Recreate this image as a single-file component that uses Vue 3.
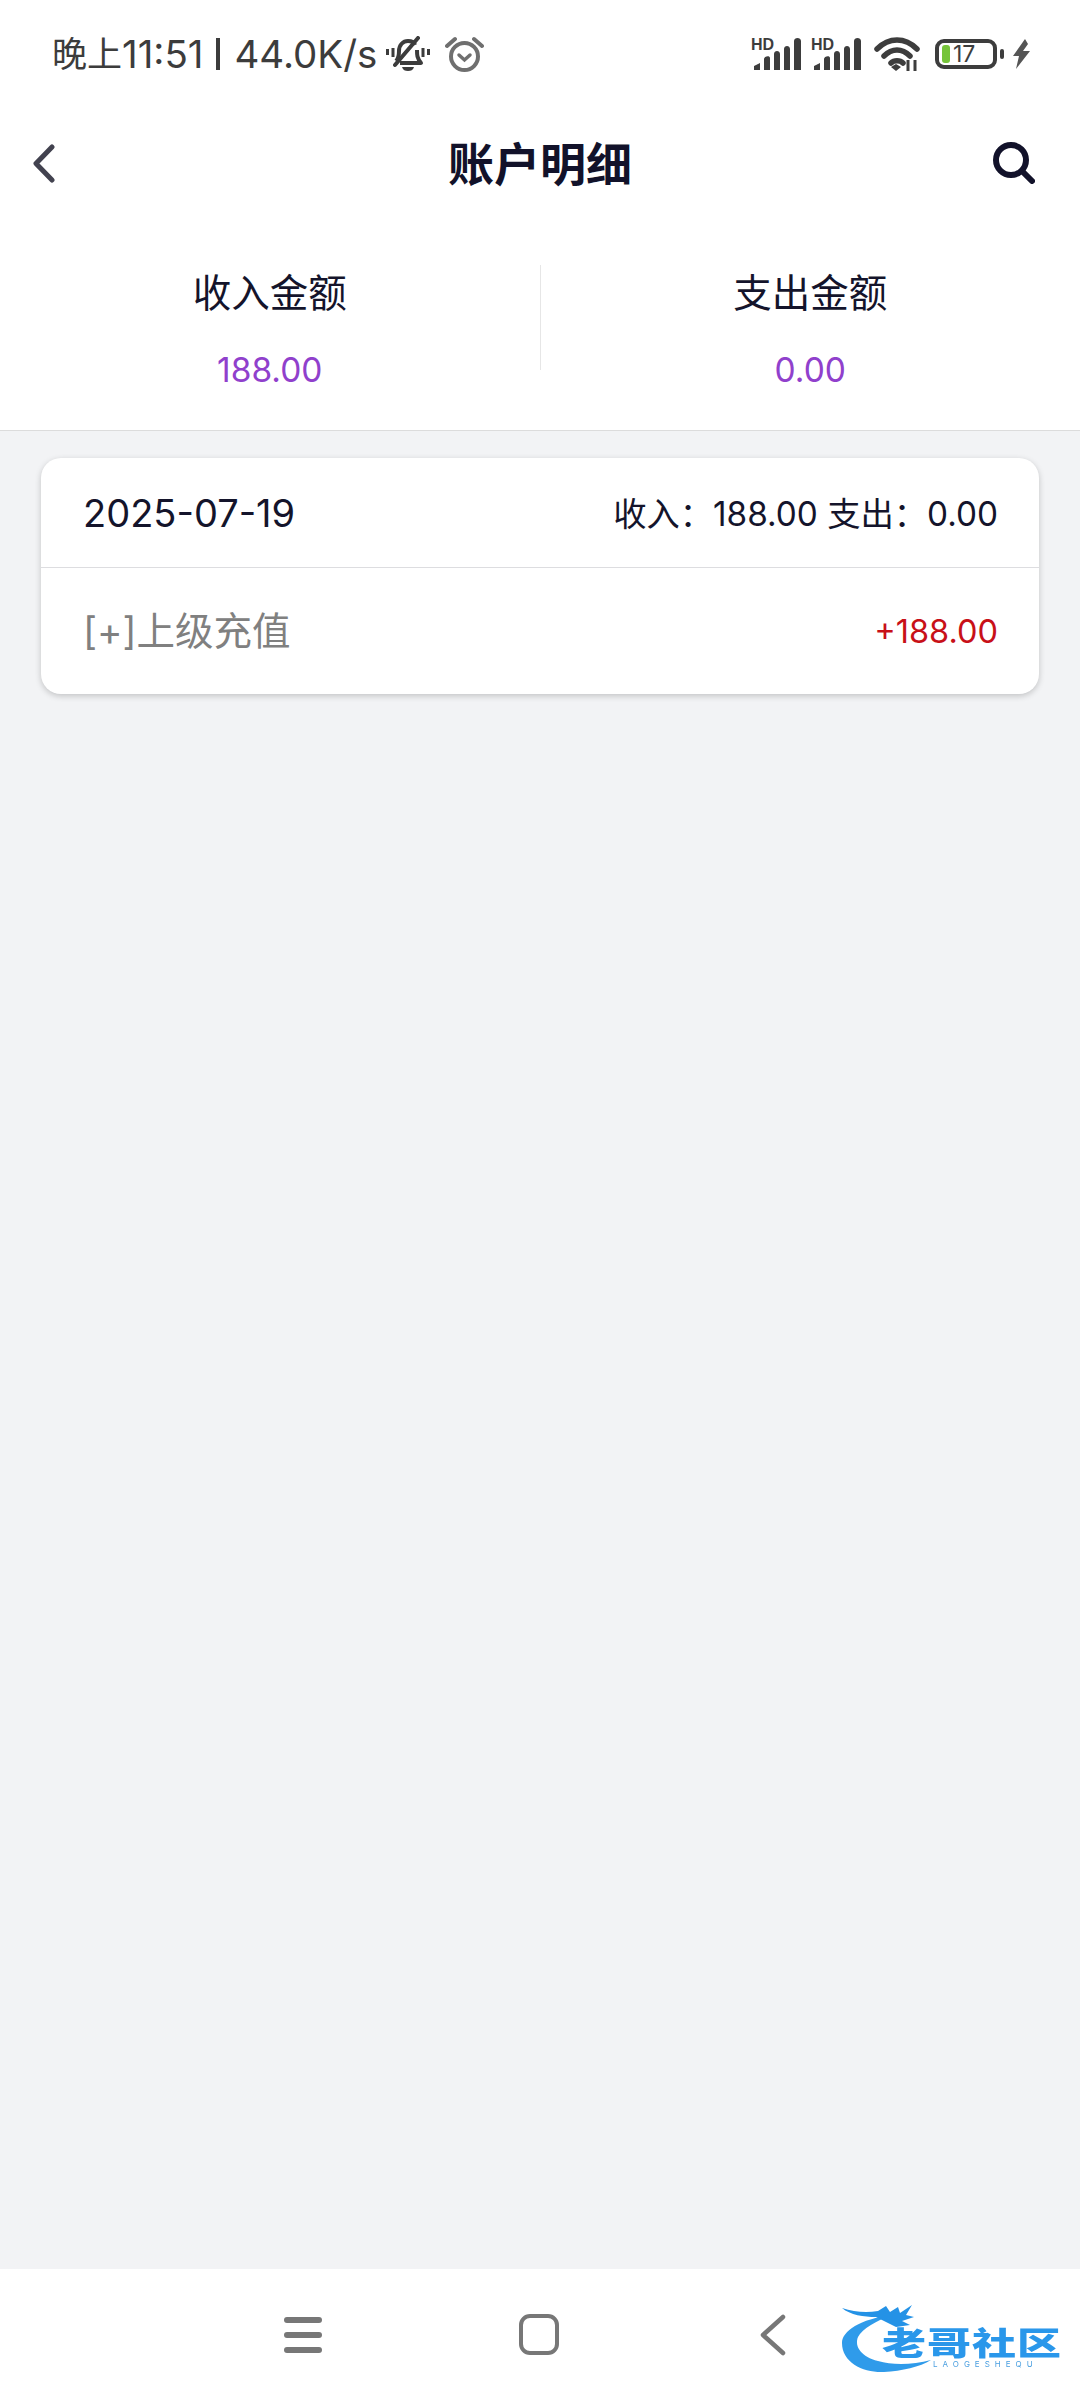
<script setup>
const totals = [
  { label: '收入金额', value: '188.00' },
  { label: '支出金额', value: '0.00' }
];
</script>

<template>
  <div class="page">
    <div class="status-bar">
      <div class="status-left">
        <span class="status-text">晚上<span class="status-num">11:51</span><span class="status-pipe"></span><span class="status-num">44.0K/s</span></span>
        <svg class="bell" viewBox="0 0 44 36" width="44" height="36">
          <path d="M10 25c3-3 3-6 3-10 0-6 4-10 9-10 3 0 6 1 7 4M31 14c0 5 0 8 4 13H14" fill="none" stroke="#3c3c3c" stroke-width="4" stroke-linejoin="round" />
          <path d="M9 29 32 2" stroke="#3c3c3c" stroke-width="4" stroke-linecap="round" />
          <path d="M16 31h12c-1 3-3 4-6 4s-5-1-6-4z" fill="#3c3c3c" />
          <path d="M7 12v9M1.500 13v6M37 12v9M42.500 13v6" stroke="#3c3c3c" stroke-width="3" />
        </svg>
        <svg class="alarm" viewBox="0 0 39 36" width="39" height="36">
          <circle cx="19.500" cy="20.500" r="13.500" fill="none" stroke="#6f6f6f" stroke-width="4" />
          <path d="M14 19l5.500 5 5.500-5" fill="none" stroke="#6f6f6f" stroke-width="3.500" stroke-linecap="round" />
          <path d="M2 10l8-7M37 10l-8-7" stroke="#6f6f6f" stroke-width="4" stroke-linecap="round" />
        </svg>
      </div>
      <div class="status-right">
        <svg v-for="n in 2" :key="n" class="signal" viewBox="0 -4 50 38" width="50" height="38">
          <text x="0" y="12" class="hd">HD</text>
          <path d="M3 32v-4l6-3v7zM13 32V21c0-3 6-4 6-1v12zM23 32V16c0-4 6-4 6 0v16zM33 32V11c0-4 6-4 6 0v21zM43 32V3c0-4 7-4 7 0v29z" fill="#3d3d3d" />
        </svg>
        <svg class="wifi" viewBox="0 0 46 36" width="46" height="36">
          <path d="M3 13c12-12 28-12 40 0M10 20c8-8 18-8 26 0M17 27c3-3 9-3 12 0" fill="none" stroke="#3d3d3d" stroke-width="5.500" stroke-linecap="round" />
          <path d="M17 31l5-3 5 3-5 4z" fill="#3d3d3d" />
          <path d="M34 24v11M41 24v11" stroke="#3d3d3d" stroke-width="3" />
        </svg>
        <div class="battery">
          <span class="battery-level"></span>
          <span class="battery-num">17</span>
        </div>
        <span class="battery-nub"></span>
        <svg class="bolt" viewBox="0 0 18 30" width="18" height="30">
          <path d="M13 0 1 17h6L4 30l14-18h-7l5-7z" fill="#555" />
        </svg>
      </div>
    </div>

    <div class="nav">
      <svg class="nav-back" viewBox="0 0 22 39" width="22" height="39">
        <path d="M19 3 3 19.500 19 36" fill="none" stroke="#42424f" stroke-width="5" stroke-linecap="round" stroke-linejoin="round" />
      </svg>
      <span class="nav-title">账户明细</span>
      <svg class="nav-search" viewBox="0 0 42 42" width="42" height="42">
        <circle cx="18" cy="18" r="15" fill="none" stroke="#12122a" stroke-width="6" />
        <path d="M29 29 39 39" stroke="#12122a" stroke-width="6" stroke-linecap="round" />
      </svg>
    </div>

    <div class="summary">
      <div v-for="item in totals" :key="item.label" class="summary-col">
        <div class="summary-label">{{ item.label }}</div>
        <div class="summary-value">{{ item.value }}</div>
      </div>
    </div>

    <div class="content">
      <div class="card">
        <div class="card-head">
          <span class="card-date">2025-07-19</span>
          <span class="card-sum">收入：188.00 支出：0.00</span>
        </div>
        <div class="card-row">
          <span class="row-name">[+]上级充值</span>
          <span class="row-amount">+188.00</span>
        </div>
      </div>
    </div>

    <div class="bottom-nav">
      <div class="menu-icon">
        <span></span><span></span><span></span>
      </div>
      <div class="home-icon"></div>
      <svg class="back-icon" viewBox="0 0 26 42" width="26" height="42">
        <path d="M23 3 3 21 23 39" fill="none" stroke="#777" stroke-width="4.500" stroke-linecap="round" stroke-linejoin="round" />
      </svg>
      <div class="logo">
        <svg class="logo-dragon" viewBox="0 0 110 72" width="110" height="72">
          <path d="M52 12C20 16 2 28 2 40c0 20 22 30 42 29 18-1 36-5 47-12-19 5-39 5-53 1C22 54 14 44 18 34c4-8 18-16 34-22z" fill="#2f9bea" />
          <path d="M2 5c12 4 24 5 36 3l8-5 4 6 8-5 2 6 12-8-6 10 8 2-12 4 8 4-14 2-8-4-12-6C24 14 10 12 2 5z" fill="#2492e6" />
        </svg>
        <span class="logo-text">老哥社区</span>
        <span class="logo-sub">LAOGESHEQU</span>
      </div>
    </div>
  </div>
</template>

<style scoped>
.page {
  width: 1080px;
  height: 2400px;
  display: flex;
  flex-direction: column;
  background: #f2f3f5;
  font-family: Inter, "Noto Sans CJK SC", sans-serif;
  overflow: hidden;
}

.status-bar {
  height: 106px;
  flex-shrink: 0;
  box-sizing: border-box;
  padding: 36px 50px 0 52px;
  display: flex;
  justify-content: space-between;
  align-items: flex-start;
  background: #fff;
}

.status-left {
  display: flex;
  align-items: center;
  height: 36px;
}

.status-text {
  width: 334px;
  display: flex;
  align-items: center;
  font-size: 35px;
  line-height: 36px;
  color: #3c3c3c;
  white-space: nowrap;
}

.status-num {
  font-size: 38.500px;
}

.status-pipe {
  width: 4px;
  height: 32px;
  margin: 0 15px 0 12px;
  background: #3c3c3c;
}

.alarm {
  margin-left: 15px;
}

.status-right {
  display: flex;
  align-items: center;
  height: 36px;
}

.signal {
  align-self: flex-start;
  margin: -2px 10px 0 0;
}

.hd {
  font-size: 16px;
  font-weight: 700;
  fill: #3d3d3d;
  font-family: "Liberation Sans", sans-serif;
}

.wifi {
  margin: 0 15px 0 3px;
}

.battery {
  position: relative;
  width: 62px;
  height: 30px;
  box-sizing: border-box;
  border: 4px solid #3d3d3d;
  border-radius: 9px;
  display: flex;
  align-items: center;
}

.battery-level {
  width: 8px;
  height: 18px;
  margin-left: 3px;
  border-radius: 3px;
  background: #76c43a;
}

.battery-num {
  margin-left: 3px;
  font-size: 23px;
  line-height: 22px;
  color: #3d3d3d;
}

.battery-nub {
  width: 4px;
  height: 10px;
  margin: 0 8px 0 3px;
  border-radius: 2px;
  background: #3d3d3d;
}

.nav {
  height: 114px;
  flex-shrink: 0;
  box-sizing: border-box;
  padding: 0 33px;
  display: grid;
  grid-template-columns: 1fr auto 1fr;
  align-items: center;
  background: #fff;
}

.nav-title {
  padding-bottom: 4px;
  font-size: 46px;
  font-weight: 700;
  color: #12122a;
}

.nav-search {
  justify-self: end;
  margin-right: 12px;
}

.summary {
  height: 211px;
  flex-shrink: 0;
  box-sizing: border-box;
  padding-top: 45px;
  display: flex;
  align-items: flex-start;
  background: #fff;
  border-bottom: 1px solid #dcdcdc;
}

.summary-col {
  flex: 1;
  height: 105px;
  text-align: center;
}

.summary-col + .summary-col {
  border-left: 1px solid #e6e6e6;
}

.summary-label {
  font-size: 38.500px;
  line-height: 56px;
  color: #14142b;
}

.summary-value {
  margin-top: 29px;
  font-size: 33.500px;
  line-height: 40px;
  color: #9040cc;
}

.content {
  flex: 1;
  padding: 27px 41px 0 41px;
}

.card {
  height: 236px;
  display: flex;
  flex-direction: column;
  background: #fff;
  border-radius: 20px;
  box-shadow: 0 2px 6px rgba(0, 0, 0, 0.2);
}

.card-head {
  height: 110px;
  box-sizing: border-box;
  padding: 0 41px 0 42px;
  display: flex;
  justify-content: space-between;
  align-items: center;
  border-bottom: 1px solid #dddde0;
}

.card-date {
  font-size: 38px;
  color: #14142b;
}

.card-sum {
  padding-bottom: 3px;
  font-size: 33.300px;
  color: #14142b;
}

.card-row {
  flex: 1;
  padding: 0 41px 0 42px;
  display: flex;
  justify-content: space-between;
  align-items: center;
}

.row-name {
  padding-bottom: 6px;
  font-size: 38.500px;
  color: #808080;
}

.row-amount {
  font-size: 32.500px;
  color: #c81018;
}

.bottom-nav {
  position: relative;
  height: 131px;
  flex-shrink: 0;
  box-sizing: border-box;
  padding: 45px 0 0 284px;
  display: flex;
  align-items: flex-start;
  background: #fff;
}

.menu-icon {
  width: 38px;
  height: 36px;
  margin-top: 3px;
  display: flex;
  flex-direction: column;
  justify-content: space-between;
}

.menu-icon span {
  height: 6px;
  border-radius: 3px;
  background: #777;
}

.home-icon {
  width: 40px;
  height: 41px;
  margin-left: 197px;
  box-sizing: border-box;
  border: 4px solid #777;
  border-radius: 11px;
}

.back-icon {
  margin-left: 201px;
}

.logo {
  position: absolute;
  left: 840px;
  top: 34px;
  width: 225px;
  height: 72px;
  filter: blur(0.6px);
}

.logo-dragon {
  position: absolute;
  left: 0;
  top: 0;
}

.logo-text {
  position: absolute;
  left: 42px;
  top: 18px;
  font-size: 44px;
  line-height: 44px;
  font-weight: 900;
  letter-spacing: 1px;
  color: #2a97ea;
  white-space: nowrap;
  transform: scaleY(0.72);
}

.logo-sub {
  position: absolute;
  left: 93px;
  top: 57px;
  font-size: 8px;
  line-height: 8px;
  letter-spacing: 5px;
  color: #4a9fe0;
  white-space: nowrap;
}
</style>
